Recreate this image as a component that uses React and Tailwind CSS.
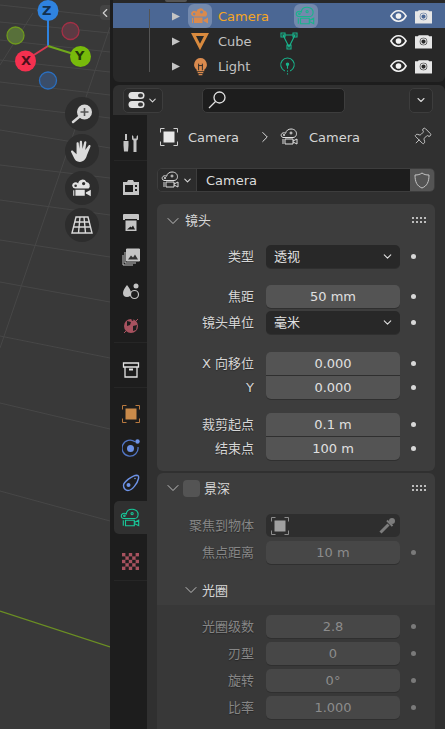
import { ChevronDown, ChevronRight, ChevronLeft, Pin } from 'lucide-react'

const LATIN = "font-['DejaVu_Sans','Noto_Sans_CJK_SC',sans-serif]"

function CamOutline({ color, className }) {
  return (
    <svg viewBox="0 0 20 18" className={className} fill="none" stroke={color} strokeWidth="1">
      <path d="M3 9.500C1 9 .6 6.500 2 5.400 3 4.600 4.600 4.600 5.600 5.300 6 2.600 8.400 1 11 1c3.600 0 5.900 2.400 5.400 5.500-.3 1.700-1.500 3-3.400 3z" />
      <circle cx="11" cy="5" r="1" />
      <circle cx="4" cy="7" r=".7" />
      <path d="M5 11h8v5H5zM3 11v5M13 13l4-2v5l-4-2" />
    </svg>
  )
}

function CamSolid({ color, className }) {
  return (
    <svg viewBox="0 0 20 18" className={className} fill={color}>
      <path fillRule="evenodd" d="M1 7a3.200 3.200 0 0 1 5.500-2.200A4 4 0 0 1 14 3.500a3.500 3.500 0 0 1 2 6H4a3.200 3.200 0 0 1-3-2.500zM4.200 5.800a1.200 1.200 0 1 0 0 2.400 1.200 1.200 0 0 0 0-2.400zM11.500 3.500a1.500 1.500 0 1 0 0 3 1.500 1.500 0 0 0 0-3z" />
      <path d="M4 10.500h8.500v5.500H4zM2 11h1v5H2zM13.500 13l4.500-2.500v6L13.500 14z" />
    </svg>
  )
}

function CamRow({ children }) {
  return <span className="flex h-[24px] w-[24px] items-center justify-center rounded-[6px] bg-[#7389ad]">{children}</span>
}

function EyeIcon() {
  return (
    <svg viewBox="0 0 18 14" className="h-[14px] w-[17px]" fill="none" stroke="#f2f2f2">
      <path d="M1 7c2-3.600 4.800-5.500 8-5.500s6 1.900 8 5.500c-2 3.600-4.800 5.500-8 5.500S3 10.600 1 7z" strokeWidth="1.700" />
      <circle cx="9" cy="7" r="3" fill="#f2f2f2" stroke="none" />
    </svg>
  )
}

function RenderIcon() {
  return (
    <svg viewBox="0 0 18 15" className="h-[15px] w-[17px]">
      <path fill="#e6e6e6" fillRule="evenodd" d="M0 2h3l1-1h10l1 1h3v13H0zM9 3.500a4 4 0 1 0 0 8 4 4 0 0 0 0-8z" />
      <circle cx="9" cy="7.500" r="2.800" fill="none" stroke="#e6e6e6" strokeWidth="1.100" />
    </svg>
  )
}

function OutlinerRow({ selected, name, icon, data, dataGap }) {
  return (
    <div className={`flex h-[25px] items-center pl-[59px] pr-[13px] pt-[1px] ${selected ? 'bg-[#4b6794]' : ''}`}>
      <svg viewBox="0 0 8 8" className="h-[9px] w-[8px]"><path d="M0 0l8 4-8 4z" fill="#c4c4c4" /></svg>
      <span className="ml-[8px] flex w-[24px] justify-center">{icon}</span>
      <span className={`ml-[6px] pt-[1px] text-[13px] leading-none ${selected ? 'text-[#f5a623]' : 'text-[#c2c2c2]'}`}>{name}</span>
      <span className={dataGap}>{data}</span>
      <span className="ml-auto flex"><EyeIcon /></span>
      <span className="ml-[8px] flex"><RenderIcon /></span>
    </div>
  )
}

function Tab({ children, active, gap }) {
  return (
    <div className={`flex h-[33px] w-[33px] shrink-0 items-center justify-center ${active ? 'rounded-l-[5px] bg-[#303030]' : ''} ${gap || ''}`}>
      {children}
    </div>
  )
}

function Sep({ gap }) {
  return <div className={`h-px w-[33px] shrink-0 bg-[#262626] ${gap || ''}`} />
}

function Dot({ dim }) {
  return <span className={`ml-[11px] h-[5px] w-[5px] rounded-full ${dim ? 'bg-[#7a7a7a]' : 'bg-[#d8d8d8]'}`} />
}

function Row({ label, dim, children, dot = true, className = '' }) {
  return (
    <div className={`flex h-[23px] items-center ${className}`}>
      <span className={`w-[97px] text-right text-[13px] leading-none [text-shadow:0_1px_1px_#0005] ${dim ? 'text-[#868686]' : 'text-[#d6d6d6]'}`}>{label}</span>
      <div className="ml-[12px] w-[134px]">{children}</div>
      {dot && <Dot dim={dim} />}
    </div>
  )
}

function NumField({ value, dim, pos = 'single' }) {
  const radius = { single: 'rounded-[5px]', top: 'rounded-t-[5px]', bottom: 'rounded-b-[5px]' }[pos]
  return (
    <div className={`flex h-[23px] items-center justify-center text-[13px] leading-none shadow-[0_1px_0_#2f2f2f] ${radius} ${dim ? 'bg-[#474747] text-[#8c8c8c]' : 'bg-[#545454] text-[#e0e0e0]'}`}>
      {value}
    </div>
  )
}

function Select({ value }) {
  return (
    <div className="flex h-[23px] items-center justify-between rounded-[5px] bg-[#282828] pl-[8px] pr-[6px] text-[13px] leading-none text-[#e0e0e0] shadow-[0_1px_0_#2f2f2f]">
      {value}
      <ChevronDown className="h-[13px] w-[13px] text-[#e0e0e0]" strokeWidth={2} />
    </div>
  )
}

function Grip() {
  return (
    <svg viewBox="0 0 15 7" className="h-[7px] w-[15px]" fill="#bdbdbd">
      {[0, 4, 8, 12].map(x => [0, 4].map(y => <rect key={`${x}-${y}`} x={x} y={y} width="2" height="2" />))}
    </svg>
  )
}

function TargetIcon({ fill, corner, className }) {
  return (
    <svg viewBox="0 0 18 18" className={className} fill="none" stroke={corner} strokeWidth="1">
      <path d="M4.500.5h-4v4M13.500.5h4v4M.5 13.500v4h4M17.500 13.500v4h-4" />
      <rect x="3.500" y="3.500" width="11" height="11" fill={fill} stroke="none" />
    </svg>
  )
}

const GRID_LINES = [
  [5, 17], [22, 33], [40, 52], [60, 72], [82, 95], [105, 118], [130, 148], [165, 178], [200, 215], [240, 257], [282, 302], [336, 358], [403, 429], [491, 521],
]

function Viewport() {
  return (
    <div className="relative h-full w-[110px] overflow-hidden bg-[#393939]">
      <svg className="absolute inset-0 h-full w-full" viewBox="0 0 110 729" fill="none" stroke="#474747" strokeWidth="1">
        {GRID_LINES.map(([a, b]) => <line key={a} x1="0" y1={a} x2="110" y2={b} />)}
        <path d="M110 27L0 348M33 13L0 65" />
        <path d="M0 611L110 647" stroke="#6b8f23" strokeWidth="1.200" />
      </svg>

      <svg className="absolute left-0 top-0 h-[100px] w-[100px]" viewBox="0 0 100 100">
        <circle cx="15.500" cy="35.500" r="8.500" fill="#58703a" stroke="#6f9a1d" strokeWidth="1.300" />
        <circle cx="70.500" cy="31" r="8.500" fill="#5c3a43" stroke="#a53046" strokeWidth="1.300" />
        <circle cx="48" cy="80.500" r="8.500" fill="#3a4d69" stroke="#2a6fc0" strokeWidth="1.300" />
        <path d="M48 46V15" stroke="#2f83e0" strokeWidth="2" />
        <path d="M48 46L26 60" stroke="#d63a52" strokeWidth="2" />
        <path d="M48 46L80 56" stroke="#70a81c" strokeWidth="2" />
        <circle cx="48" cy="10.500" r="10.500" fill="#2f83e0" />
        <circle cx="25.500" cy="61" r="10.500" fill="#f5304f" />
        <circle cx="80.500" cy="56.500" r="10.500" fill="#78bb0b" />
      </svg>
      <span className="absolute left-[42px] top-[2px] text-[13px] font-bold leading-[17px] text-[#12304f]">Z</span>
      <span className="absolute left-[21px] top-[52px] text-[13px] font-bold leading-[17px] text-[#4d0f1a]">X</span>
      <span className="absolute left-[75px] top-[47px] text-[13px] font-bold leading-[17px] text-[#23380a]">Y</span>

      <div className="absolute left-[65px] top-[97px] flex flex-col gap-[3px]">
        <div className="flex h-[34px] w-[34px] items-center justify-center rounded-full bg-[#2d2d2d]">
          <svg viewBox="0 0 22 22" className="h-[22px] w-[22px]" fill="none">
            <circle cx="13.500" cy="9" r="7.500" fill="#d8d8d8" />
            <path d="M13.500 5v8M9.500 9h8" stroke="#555" strokeWidth="1.600" />
            <path d="M8 14l-6 5" stroke="#d8d8d8" strokeWidth="2.500" strokeLinecap="round" />
          </svg>
        </div>
        <div className="flex h-[34px] w-[34px] items-center justify-center rounded-full bg-[#2d2d2d]">
          <svg viewBox="0 0 22 22" className="h-[24px] w-[24px]" fill="#dcdcdc">
            <path d="M6 4c0-1.300 2-1.300 2 0l.5 5L9 2.500c0-1.300 2-1.300 2 0L11.500 9 13 3c.3-1.300 2.200-1 2 .3L14 10l3-4c.8-1 2.300-.2 1.700 1L15.500 15c-1 3.500-3 6-6.500 6-3 0-4.500-1.500-5.500-4L1 12c-.5-1.200 1-2 1.800-1L6 14z" />
          </svg>
        </div>
        <div className="flex h-[34px] w-[34px] items-center justify-center rounded-full bg-[#2d2d2d]">
          <CamSolid color="#e2e2e2" className="h-[22px] w-[22px]" />
        </div>
        <div className="flex h-[34px] w-[34px] items-center justify-center rounded-full bg-[#2d2d2d]">
          <svg viewBox="0 0 22 22" className="h-[22px] w-[22px]" fill="none" stroke="#d8d8d8" strokeWidth="1.400">
            <path d="M5 3h12l4 16H1zM9 3L7.500 19M13 3l1.500 16M3.500 8h15M2.300 13h17.400" />
          </svg>
        </div>
      </div>

      <div className="absolute right-0 top-[5px] flex h-[15px] w-[10px] items-center justify-center rounded-l-[4px] bg-[#444444]">
        <ChevronLeft className="h-[14px] w-[14px] shrink-0 text-[#d0d0d0]" strokeWidth={2} />
      </div>
    </div>
  )
}

const CHECKER = [0, 1, 2, 3, 4].flatMap(r => [0, 1, 2, 3, 4].filter(c => (r + c) % 2 === 1).map(c => [c, r]))

export default function App() {
  return (
    <div className={`flex h-[729px] w-[445px] overflow-hidden bg-[#1d1d1d] ${LATIN}`}>
      <Viewport />

      <div className="ml-[3px] flex min-w-0 flex-1 flex-col">
        {/* outliner */}
        <div className="relative h-[82px] rounded-b-[6px] bg-[#282828] pt-[3px]">
          <div className="absolute left-[52px] top-0 h-[2px] w-[22px] rounded-b-[2px] bg-[#555555]" />
          <div className="absolute left-[36px] top-[9px] h-[63px] w-px bg-[#555555]" />
          <OutlinerRow
            selected
            name="Camera"
            icon={<CamRow><CamSolid color="#d98a4e" className="h-[20px] w-[20px]" /></CamRow>}
            data={<CamRow><CamOutline color="#18b48c" className="h-[22px] w-[22px]" /></CamRow>}
            dataGap="ml-[25px]"
          />
          <OutlinerRow
            name="Cube"
            icon={
              <svg viewBox="0 0 18 18" className="h-[18px] w-[18px]" fill="none" stroke="#d98a3e" strokeWidth="3">
                <path d="M2.500 2.500h13L9 15z" />
              </svg>
            }
            data={
              <svg viewBox="0 0 18 18" className="h-[18px] w-[18px]" fill="none" stroke="#18b48c" strokeWidth="1.100">
                <path d="M3 3h12L9 15zM1 1h4v4H1zM13 1h4v4h-4zM7 13h4v4H7z" fill="#282828" />
              </svg>
            }
            dataGap="ml-[28px]"
          />
          <OutlinerRow
            name="Light"
            icon={
              <svg viewBox="0 0 18 20" className="h-[19px] w-[17px]" fill="none">
                <path d="M9 1a7 7 0 0 0-4 12.500V15h8v-1.500A7 7 0 0 0 9 1z" fill="#d98a4e" />
                <path d="M7 7v7M11 7v7M7 9h4" stroke="#282828" strokeWidth="1" />
                <path d="M6 16.500h6M7 18.500h4" stroke="#d98a4e" strokeWidth="1.300" />
              </svg>
            }
            data={
              <svg viewBox="0 0 18 20" className="h-[18px] w-[17px]" fill="none" stroke="#18b48c" strokeWidth="1.200">
                <path d="M6 15.500a7.500 7.500 0 1 1 6 0" />
                <circle cx="9" cy="8" r="1.300" fill="#18b48c" />
                <path d="M9 9v4M9 15v1.500M9 18v1.500" />
              </svg>
            }
            dataGap="ml-[29px]"
          />
        </div>

        {/* properties */}
        <div className="mt-[3px] flex min-h-0 flex-1 flex-col rounded-t-[6px] bg-[#303030]">
          <div className="flex h-[30px] shrink-0 items-center pl-[10px] pr-[12px]">
            <div className="flex h-[25px] w-[40px] items-center justify-center gap-[2px] rounded-[5px] border border-[#3d3d3d] bg-[#2a2a2a]">
              <svg viewBox="0 0 17 18" className="h-[18px] w-[17px]" fill="none">
                <rect x=".5" y="1" width="16" height="7" rx="3.500" fill="#e2e2e2" />
                <rect x="10" y="2.500" width="5" height="4" rx="2" fill="#333" />
                <rect x=".5" y="10" width="16" height="7" rx="3.500" fill="#e2e2e2" />
                <rect x="10" y="11.500" width="5" height="4" rx="2" fill="#333" />
              </svg>
              <ChevronDown className="h-[11px] w-[11px] text-[#d8d8d8]" strokeWidth={2.200} />
            </div>
            <div className="ml-[39px] flex h-[25px] w-[143px] items-center rounded-[5px] border border-[#3d3d3d] bg-[#1d1d1d] pl-[5px]">
              <svg viewBox="0 0 18 18" className="h-[18px] w-[18px]" fill="none" stroke="#e2e2e2" strokeWidth="1.300">
                <circle cx="11.500" cy="6.500" r="5.500" />
                <path d="M7.500 10.500L1 17" />
              </svg>
            </div>
            <div className="ml-auto flex h-[25px] w-[24px] items-center justify-center rounded-[5px] border border-[#3d3d3d] bg-[#2a2a2a]">
              <ChevronDown className="h-[12px] w-[12px] text-[#d8d8d8]" strokeWidth={2.200} />
            </div>
          </div>

          <div className="flex min-h-0 flex-1">
            {/* tabs */}
            <div className="flex w-[34px] shrink-0 flex-col items-end bg-[#1d1d1d] pt-[11px]">
              <Tab>
                <svg viewBox="0 0 18 18" className="h-[18px] w-[18px]" fill="#c4c4c4">
                  <path d="M3 0h2v6H3zM1.500 7h5v4.500l-.500 6H2l-.500-6z" />
                  <path d="M10 1v3.500a2 2 0 0 0 1.500 2V18h3V6.500A2 2 0 0 0 16 4.500V1l-1.500 1.500v2h-3v-2z" />
                </svg>
              </Tab>
              <Sep gap="mt-[1px]" />
              <Tab gap="mt-[9px]">
                <svg viewBox="0 0 18 18" className="h-[18px] w-[18px]" fill="#c4c4c4">
                  <path fillRule="evenodd" d="M1 4h4l1-2h5l1 2h5v13H1zM3 7v7h8V7zM13 7v2h2V7zM13 11v2h2v-2z" />
                </svg>
              </Tab>
              <Tab gap="mt-[2px]">
                <svg viewBox="0 0 18 18" className="h-[18px] w-[18px]" fill="#c4c4c4">
                  <path fillRule="evenodd" d="M1 2a1 1 0 0 1 1-1h14a1 1 0 0 1 1 1v5h-2V6H3v1H1zM3.500 7.500h11V18h-11zM5 16.500h8l-2-4-1.500 2-1-1z" />
                </svg>
              </Tab>
              <Tab gap="mt-[2px]">
                <svg viewBox="0 0 18 18" className="h-[18px] w-[18px]" fill="none" stroke="#c4c4c4" strokeWidth="1">
                  <path d="M4.500 1h13v12h-13z" fill="#c4c4c4" />
                  <path d="M6 11.500l3-4 2 2 2-3 3 5z" fill="#333" stroke="none" />
                  <path d="M3 4v11h11M1 7v10h10" />
                </svg>
              </Tab>
              <Tab gap="mt-[1px]">
                <svg viewBox="0 0 18 18" className="h-[18px] w-[18px]" fill="#c4c4c4">
                  <path d="M5 3c2 3 4 5 4 8a4 4 0 0 1-8 0c0-3 2-5 4-8z" />
                  <circle cx="14" cy="4" r="2.500" />
                  <circle cx="12.500" cy="12.500" r="4" fill="none" stroke="#c4c4c4" strokeWidth="1.200" />
                </svg>
              </Tab>
              <Tab gap="mt-[2px]">
                <svg viewBox="0 0 18 18" className="h-[18px] w-[18px]" fill="none">
                  <circle cx="9" cy="9" r="7" fill="#a8525f" />
                  <path d="M5 4l4 1-1 3-3 1zM11 9l4-1-1 5-3 1zM9 1l3 2-2 1z" fill="#1d1d1d" />
                  <path d="M2 16L16 2" stroke="#a8525f" strokeWidth="1" />
                </svg>
              </Tab>
              <Sep />
              <Tab gap="mt-[10px]">
                <svg viewBox="0 0 18 18" className="h-[18px] w-[18px]" fill="none" stroke="#e2e2e2" strokeWidth="1.300">
                  <path d="M1.500 2h15v4h-15zM3 6v10h12V6" />
                  <path d="M7 8.500h4" strokeWidth="2" />
                </svg>
              </Tab>
              <Sep gap="mt-[1px]" />
              <Tab gap="mt-[9px]">
                <TargetIcon fill="#c98a4a" corner="#b9793f" className="h-[18px] w-[18px]" />
              </Tab>
              <Tab gap="mt-[1px]">
                <svg viewBox="0 0 18 18" className="h-[18px] w-[18px]" fill="none">
                  <path d="M13 2.800A8 8 0 1 0 16 8" stroke="#5175c4" strokeWidth="1.300" />
                  <circle cx="8.500" cy="9.500" r="3.500" fill="#6d92e6" />
                  <circle cx="15.500" cy="2.500" r="2.200" fill="#6d92e6" />
                </svg>
              </Tab>
              <Tab gap="mt-[2px]">
                <svg viewBox="0 0 18 18" className="h-[18px] w-[18px]" fill="none" stroke="#6d92e6" strokeWidth="1.400">
                  <path d="M1.500 11.500C1.500 8 10 1.500 15 1.200c1.800 0 1.800 2 1.500 3.300C15.500 9.500 10 16.500 6 16.500c-2.500 0-4.500-2.500-4.500-5z" />
                  <circle cx="6.500" cy="11" r="2" fill="#6d92e6" stroke="none" />
                  <circle cx="13" cy="4.500" r=".8" fill="#6d92e6" stroke="none" />
                </svg>
              </Tab>
              <Tab active gap="mt-[2px]">
                <CamOutline color="#18c89a" className="h-[22px] w-[22px]" />
              </Tab>
              <Tab gap="mt-[11px]">
                <svg viewBox="0 0 15 15" className="h-[17px] w-[17px]">
                  <rect width="15" height="15" fill="#a8525f" />
                  {CHECKER.map(([c, r]) => (
                    <rect key={`${c}-${r}`} x={c * 3} y={r * 3} width="3" height="3" fill="#1d1d1d" />
                  ))}
                </svg>
              </Tab>
              <Sep gap="mt-[2px]" />
            </div>

            {/* content */}
            <div className="min-w-0 flex-1 pl-[10px] pr-[10px] pt-[11px]">
              <div className="flex h-[22px] items-center text-[13px] leading-none text-[#d6d6d6]">
                <TargetIcon fill="#e8e8e8" corner="#d0d0d0" className="ml-[3px] h-[18px] w-[18px]" />
                <span className="ml-[10px]">Camera</span>
                <ChevronRight className="ml-[17px] h-[18px] w-[18px] text-[#e0e0e0]" strokeWidth={1.300} />
                <CamOutline color="#e0e0e0" className="ml-[6px] h-[20px] w-[20px]" />
                <span className="ml-[9px]">Camera</span>
                <Pin className="ml-auto mr-[3px] h-[20px] w-[20px] rotate-45 text-[#c8c8c8]" strokeWidth={1.100} />
              </div>

              <div className="mt-[20px] flex h-[24px] overflow-hidden rounded-[5px] border border-[#3d3d3d]">
                <div className="flex w-[38px] items-center justify-center gap-[1px] bg-[#2c2c2c]">
                  <CamOutline color="#dcdcdc" className="h-[20px] w-[20px]" />
                  <ChevronDown className="h-[11px] w-[11px] text-[#d8d8d8]" strokeWidth={2.200} />
                </div>
                <div className="flex flex-1 items-center border-l border-[#3d3d3d] bg-[#1d1d1d] pl-[9px] text-[13px] leading-none text-[#dcdcdc]">
                  Camera
                </div>
                <div className="flex w-[24px] items-center justify-center bg-[#545454]">
                  <svg viewBox="0 0 16 17" className="h-[17px] w-[16px]" fill="none" stroke="#c4c4c4" strokeWidth="1">
                    <path d="M8 1c2 1.500 4 2 7 2 0 7-2 11-7 13C3 14 1 10 1 3c3 0 5-.5 7-2z" />
                  </svg>
                </div>
              </div>

              {/* lens panel */}
              <div className="mt-[12px] h-[267px] rounded-[6px] bg-[#3d3d3d]">
                <div className="flex h-[33px] items-center pl-[6px] pr-[8px] text-[13px] leading-none text-[#d6d6d6]">
                  <ChevronDown className="h-[20px] w-[20px]" strokeWidth={1} />
                  <span className="ml-[2px]">镜头</span>
                  <span className="ml-auto flex"><Grip /></span>
                </div>
                <Row label="类型" className="mt-[8px]"><Select value="透视" /></Row>
                <Row label="焦距" className="mt-[17px]"><NumField value="50 mm" /></Row>
                <Row label="镜头单位" className="mt-[3px]"><Select value="毫米" /></Row>
                <Row label="X 向移位" className="mt-[18px]"><NumField value="0.000" pos="top" /></Row>
                <Row label="Y" className="mt-[1px]"><NumField value="0.000" pos="bottom" /></Row>
                <Row label="裁剪起点" className="mt-[14px]"><NumField value="0.1 m" pos="top" /></Row>
                <Row label="结束点" className="mt-[1px]"><NumField value="100 m" pos="bottom" /></Row>
              </div>

              {/* depth of field panel */}
              <div className="mt-[2px] h-[300px] rounded-t-[6px] bg-[#3d3d3d]">
                <div className="flex h-[30px] items-center pl-[6px] pr-[8px] text-[13px] leading-none text-[#d6d6d6]">
                  <ChevronDown className="h-[20px] w-[20px]" strokeWidth={1} />
                  <span className="h-[17px] w-[17px] rounded-[4px] bg-[#545454]" />
                  <span className="ml-[4px]">景深</span>
                  <span className="ml-auto flex"><Grip /></span>
                </div>
                <Row label="聚焦到物体" dim dot={false} className="mt-[11px]">
                  <div className="flex h-[23px] items-center justify-between rounded-[5px] bg-[#2e2e2e] pl-[5px] pr-[4px]">
                    <TargetIcon fill="#a0a0a0" corner="#8c8c8c" className="h-[18px] w-[18px]" />
                    <svg viewBox="0 0 18 18" className="h-[18px] w-[18px]" fill="none" stroke="#7c7c7c">
                      <path d="M2.500 15.500L10.500 7.500" strokeWidth="3" />
                      <path d="M9 3.500l5.500 5.500" strokeWidth="2" />
                      <circle cx="14" cy="4" r="3" fill="#7c7c7c" stroke="none" />
                    </svg>
                  </div>
                </Row>
                <Row label="焦点距离" dim className="mt-[4px]"><NumField value="10 m" dim /></Row>
                <div className="mb-[4px] mt-[15px] flex h-[22px] items-center pl-[24px] text-[13px] leading-none text-[#d6d6d6]">
                  <ChevronDown className="h-[20px] w-[20px]" strokeWidth={1} />
                  <span className="ml-[1px]">光圈</span>
                </div>
                <div className="h-[125px] bg-[#383838] pt-[10px]">
                  <Row label="光圈级数" dim><NumField value="2.8" dim /></Row>
                  <Row label="刃型" dim className="mt-[4px]"><NumField value="0" dim /></Row>
                  <Row label="旋转" dim className="mt-[4px]"><NumField value="0°" dim /></Row>
                  <Row label="比率" dim className="mt-[4px]"><NumField value="1.000" dim /></Row>
                </div>
              </div>
            </div>
          </div>
        </div>
      </div>
    </div>
  )
}
